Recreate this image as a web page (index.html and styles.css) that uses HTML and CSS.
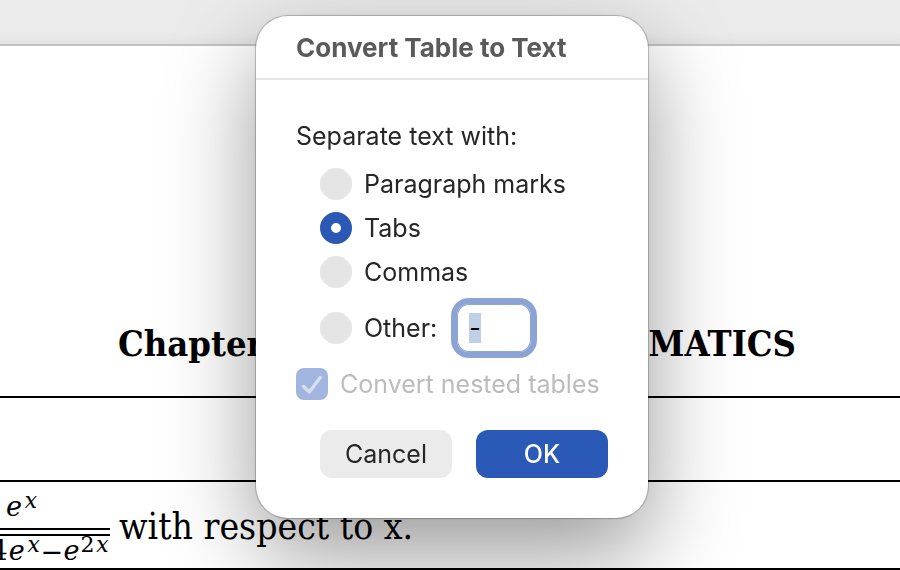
FILE: index.html
```html
<!DOCTYPE html>
<html lang="en">
<head>
    <meta charset="UTF-8">
    <meta name="viewport" content="width=device-width, initial-scale=1.0">
    <title>Convert Table to Text</title>
    <link rel="stylesheet" href="styles.css">
</head>
<body>

    <!-- Document -->
    <div class="toolbar"></div>
    <main class="document">
        <h1 class="chapter">
            <span>Chapter</span>
            <span>EMATICS</span>
        </h1>
        <table class="doc-table">
            <tbody>
                <tr class="empty-row">
                    <td></td>
                </tr>
                <tr>
                    <td>
                        <div class="question">
                            <div class="fraction">
                                <div class="numerator">𝑒<sup>𝑥</sup></div>
                                <div class="denominator">
                                    <span class="root">4𝑒<sup>𝑥</sup>−𝑒<sup>2𝑥</sup></span>
                                </div>
                            </div>
                            <span>with respect to x.</span>
                        </div>
                    </td>
                </tr>
            </tbody>
        </table>
    </main>

    <!-- Dialog -->
    <div class="overlay">
        <form class="dialog" role="dialog" aria-labelledby="dialogTitle">
            <h2 class="dialog-title" id="dialogTitle">Convert Table to Text</h2>
            <div class="dialog-body">
                <fieldset>
                    <legend>Separate text with:</legend>
                    <div class="options">
                        <label class="option"><input type="radio" name="separator" value="paragraph"> Paragraph marks</label>
                        <label class="option"><input type="radio" name="separator" value="tabs" checked> Tabs</label>
                        <label class="option"><input type="radio" name="separator" value="commas"> Commas</label>
                        <div class="option other">
                            <input type="radio" name="separator" value="other" id="other">
                            <label for="other">Other:</label>
                            <input type="text" class="other-text" id="otherText" value="-" maxlength="1" aria-label="Other:">
                        </div>
                    </div>
                </fieldset>
                <label class="option nested">
                    <span class="checkbox">
                        <input type="checkbox" checked disabled>
                        <svg viewBox="0 0 32 32" aria-hidden="true"><path d="M7.500 18.500L13.300 24L24.300 9.500"/></svg>
                    </span>
                    Convert nested tables
                </label>
                <div class="buttons">
                    <button type="button" class="btn">Cancel</button>
                    <button type="submit" class="btn btn-primary">OK</button>
                </div>
            </div>
        </form>
    </div>

    <script src="script.js"></script>
</body>
</html>
```
FILE: styles.css
```css
* {
    box-sizing: border-box;
}

body {
    margin: 0;
    background-color: #fff;
    color: #000;
    font-family: "DejaVu Serif Condensed", "DejaVu Serif", serif;
    overflow: hidden;
}

/* Document */
.toolbar {
    height: 46px;
    background: linear-gradient(#ebebeb 75%, #e3e3e3);
    border-bottom: 2px solid #c2c2c2;
}

.document {
    padding-top: 272px;
}

.chapter {
    display: flex;
    justify-content: space-between;
    margin: 0 104px 28px 118px;
    font-size: 36px;
    line-height: 50px;
}

.doc-table {
    width: 100%;
    border-collapse: collapse;
}

.doc-table td {
    height: 88px;
    padding: 0;
    border-top: 2px solid #000;
    border-bottom: 2px solid #000;
}

.doc-table .empty-row td {
    height: 84px;
}

.question {
    display: flex;
    align-items: center;
    gap: 9px;
    height: 86px;
    padding-top: 4px;
    font-size: 37px;
    line-height: 48px;
    white-space: nowrap;
}

.fraction {
    width: 110px;
    overflow: hidden;
    font-family: "DejaVu Math TeX Gyre", "DejaVu Serif", serif;
    font-size: 27px;
    line-height: 32px;
}

.fraction sup {
    font-size: 22px;
    line-height: 0;
    vertical-align: 8px;
}

.numerator {
    padding: 7px 0 0 5px;
    border-bottom: 2px solid #000;
    height: 44px;
}

.denominator {
    display: flex;
    justify-content: flex-end;
    margin-top: 4px;
}

.root {
    padding-top: 1px;
    border-top: 2px solid #000;
}

/* Dialog */
.overlay {
    position: fixed;
    inset: 0;
    display: flex;
    justify-content: center;
    align-items: flex-start;
    padding: 16px 0 0 4px;
}

.dialog {
    min-width: 392px;
    border-radius: 32px;
    background-color: #fff;
    color: #262626;
    font-family: Inter, "Liberation Sans", sans-serif;
    font-size: 25px;
    line-height: 32px;
    box-shadow: 0 0 1px 1px rgba(0, 0, 0, 0.25), 0 36px 90px rgba(0, 0, 0, 0.4);
}

.dialog-title {
    margin: 0;
    padding: 16px 40px 14px;
    border-bottom: 2px solid #e5e5e5;
    color: #5a5a5a;
    font-size: 26px;
    font-weight: 700;
}

.dialog-body {
    padding: 40px;
}

fieldset {
    margin: 0;
    padding: 0;
    border: 0;
}

legend {
    padding: 0;
}

.options {
    display: flex;
    flex-direction: column;
    gap: 12px;
    padding: 16px 0 0 24px;
}

.option {
    display: flex;
    align-items: center;
    gap: 12px;
}

.other {
    margin-top: 4px;
}

input[type="radio"] {
    appearance: none;
    width: 32px;
    height: 32px;
    margin: 0;
    border-radius: 50%;
    background-color: #e5e5e5;
}

input[type="radio"]:checked {
    border: 11px solid #2b58b5;
    background-color: #fff;
}

.other-text {
    width: 74px;
    height: 48px;
    margin-left: 8px;
    padding: 0 12px;
    border: 0;
    border-radius: 12px;
    outline: none;
    background-color: #fff;
    color: #000;
    font: inherit;
    box-shadow: 0 0 0 6px #8ca3d6, inset 0 0 0 1px #8ca3d6;
}

.other-text::selection {
    background-color: #bfcfe8;
    color: #000;
}

.nested {
    margin-top: 16px;
    color: #bcbcbc;
}

.checkbox {
    display: grid;
    width: 32px;
    height: 32px;
}

.checkbox input,
.checkbox svg {
    grid-area: 1 / 1;
    width: 32px;
    height: 32px;
    margin: 0;
}

.checkbox input {
    appearance: none;
    border-radius: 8px;
    background-color: #a2b5de;
}

.checkbox svg {
    fill: none;
    stroke: #d5def0;
    stroke-width: 3.5;
    stroke-linecap: round;
    stroke-linejoin: round;
}

.buttons {
    display: flex;
    justify-content: flex-end;
    gap: 24px;
    margin-top: 30px;
}

.btn {
    width: 132px;
    height: 48px;
    padding: 0;
    border: 0;
    border-radius: 12px;
    background-color: #ebebeb;
    color: #262626;
    font: inherit;
}

.btn-primary {
    background-color: #2b59b8;
    color: #fff;
    font-weight: 500;
}
```
FILE: script.js
```js
// put the focus in the "Other" box with its text selected
const otherText = document.getElementById("otherText");
otherText.focus();
otherText.select();
```
